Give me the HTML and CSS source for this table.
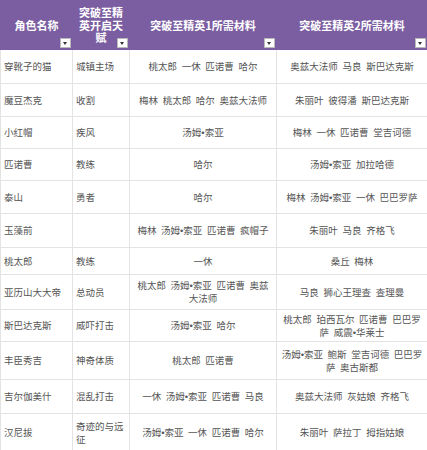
FILE: index.html
```html
<!DOCTYPE html>
<html lang="zh-CN">
<head>
<meta charset="utf-8">
<title>突破材料</title>
<link rel="stylesheet" href="styles.css">
</head>
<body>
<table class="grid">
  <colgroup><col class="c1"><col class="c2"><col class="c3"><col class="c4"></colgroup>
  <thead>
    <tr>
      <th>角色名称<span class="filter"></span></th>
      <th>突破至精英开启天赋<span class="filter"></span></th>
      <th>突破至精英1所需材料<span class="filter"></span></th>
      <th>突破至精英2所需材料<span class="filter"></span></th>
    </tr>
  </thead>
  <tbody>
    <tr class="r1"><td>穿靴子的猫</td><td>城镇主场</td><td class="mid">桃太郎 一休 匹诺曹 哈尔</td><td class="mid">奥兹大法师 马良 斯巴达克斯</td></tr>
    <tr class="r2"><td>魔豆杰克</td><td>收割</td><td class="mid">梅林 桃太郎 哈尔 奥兹大法师</td><td class="mid">朱丽叶 彼得潘 斯巴达克斯</td></tr>
    <tr class="r3"><td>小红帽</td><td>疾风</td><td class="mid">汤姆•索亚</td><td class="mid">梅林 一休 匹诺曹 堂吉诃德</td></tr>
    <tr class="r4"><td>匹诺曹</td><td>教练</td><td class="mid">哈尔</td><td class="mid">汤姆•索亚 加拉哈德</td></tr>
    <tr class="r5"><td>泰山</td><td>勇者</td><td class="mid">哈尔</td><td class="mid">梅林 汤姆•索亚 一休 巴巴罗萨</td></tr>
    <tr class="r6"><td>玉藻前</td><td></td><td class="mid">梅林 汤姆•索亚 匹诺曹 疯帽子</td><td class="mid">朱丽叶 马良 齐格飞</td></tr>
    <tr class="r7"><td>桃太郎</td><td>教练</td><td class="mid">一休</td><td class="mid">桑丘 梅林</td></tr>
    <tr class="r8"><td>亚历山大大帝</td><td>总动员</td><td class="mid">桃太郎 汤姆•索亚 匹诺曹 奥兹大法师</td><td class="mid">马良 狮心王理查 查理曼</td></tr>
    <tr class="r9"><td>斯巴达克斯</td><td>威吓打击</td><td class="mid">汤姆•索亚 哈尔</td><td class="mid">桃太郎 珀西瓦尔 匹诺曹 巴巴罗萨 威震•华莱士</td></tr>
    <tr class="r10"><td>丰臣秀吉</td><td>神奇体质</td><td class="mid">桃太郎 匹诺曹</td><td class="mid">汤姆•索亚 鲍斯 堂吉诃德 巴巴罗萨 奥古斯都</td></tr>
    <tr class="r11"><td>吉尔伽美什</td><td>混乱打击</td><td class="mid">一休 汤姆•索亚 匹诺曹 马良</td><td class="mid">奥兹大法师 灰姑娘 齐格飞</td></tr>
    <tr class="r12"><td>汉尼拔</td><td>奇迹的与远征</td><td class="mid">汤姆•索亚 一休 匹诺曹 哈尔</td><td class="mid">朱丽叶 萨拉丁 拇指姑娘</td></tr>
  </tbody>
</table>
</body>
</html>
```
FILE: styles.css
```css
html, body {
  margin: 0;
  padding: 0;
  background: #ffffff;
}

.grid {
  border-collapse: collapse;
  table-layout: fixed;
  width: 427px;
  font-family: "Liberation Sans", "Noto Sans CJK SC", sans-serif;
}

.c1 { width: 72px; }
.c2 { width: 57px; }
.c3 { width: 147px; }
.c4 { width: 151px; }

.grid th {
  position: relative;
  height: 48px;
  padding: 0 4px;
  background: #7b5ea1;
  color: #ffffff;
  font-family: "Noto Sans CJK SC", sans-serif;
  font-size: 11px;
  font-weight: 700;
  line-height: 12.5px;
  text-align: center;
  vertical-align: middle;
  border: 1px solid #7b5ea1;
}

.filter {
  position: absolute;
  right: 1px;
  bottom: 1px;
  width: 9px;
  height: 8px;
  background: #ffffff;
  border: 1px solid #b9b9b9;
}

.filter::after {
  content: "";
  position: absolute;
  left: 2px;
  top: 3px;
  border-left: 2.5px solid transparent;
  border-right: 2.5px solid transparent;
  border-top: 3px solid #333333;
}

.grid td {
  padding: 0 3px;
  font-size: 9.5px;
  line-height: 13px;
  color: #555555;
  word-spacing: 2px;
  text-align: left;
  vertical-align: middle;
  border: 1px solid #e3e3e3;
}

.grid td.mid {
  text-align: center;
}

.r1 { height: 34px; }
.r2 { height: 33px; }
.r3 { height: 32px; }
.r4 { height: 32px; }
.r5 { height: 33px; }
.r6 { height: 34px; }
.r7 { height: 27px; }
.r8 { height: 35px; }
.r9 { height: 32px; }
.r10 { height: 38px; }
.r11 { height: 34px; }
.r12 { height: 38px; }
```
